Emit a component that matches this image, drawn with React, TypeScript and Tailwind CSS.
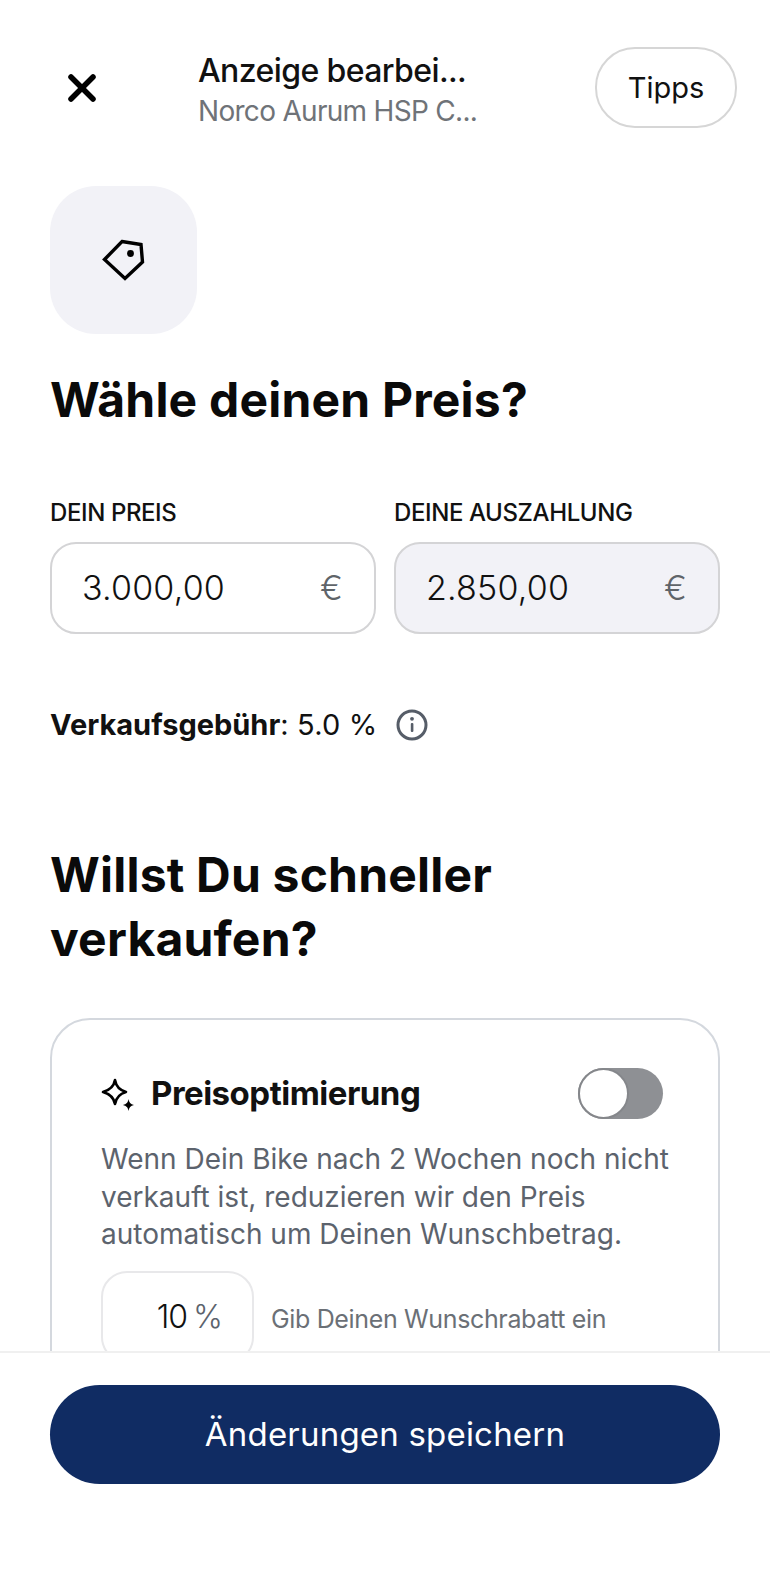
import { X } from "lucide-react";

const font = "font-['Inter',sans-serif]";

function PriceField({ label, value, filled }: { label: string; value: string; filled?: boolean }) {
  return (
    <div className="flex-1">
      <div className="text-[24px] leading-[30px] font-medium text-[#111] tracking-[-0.4px]">{label}</div>
      <div
        className={`mt-[14px] h-[92px] rounded-[26px] border-2 border-[#d4d4d6] flex items-center justify-between pl-[30px] pr-[31px] ${
          filled ? "bg-[#f2f2f7]" : "bg-white"
        }`}
      >
        <span className="-mt-[2px] text-[34px] font-light text-[#111] tracking-[0.2px]">{value}</span>
        <span className="-mt-[2px] text-[34px] font-light text-[#5f6469]">€</span>
      </div>
    </div>
  );
}

function TagIcon() {
  return (
    <svg width="44" height="44" viewBox="0 0 44 44" fill="none" stroke="#000" strokeWidth="3.4" strokeLinejoin="miter">
      <path d="M20 3.5 L39 6.5 L40.5 24 L23 40.5 L2.5 21.5 Z" />
      <circle cx="28.5" cy="15.5" r="3.4" fill="#000" stroke="none" />
    </svg>
  );
}

function SparkleIcon() {
  return (
    <svg width="34" height="34" viewBox="0 0 34 34" fill="none">
      <path d="M14 3 C15 9 18 13 25 15 C18 17 15 21 14 27 C13 21 9 17 2 15 C9 13 13 9 14 3 Z" stroke="#000" strokeWidth="2.6" strokeLinejoin="round" />
      <path d="M27.5 22 C28 25.5 29.5 27 33 28 C29.5 29 28 30.5 27.5 34 C27 30.5 25.5 29 22 28 C25.5 27 27 25.5 27.5 22 Z" fill="#000" />
    </svg>
  );
}

function InfoIcon() {
  return (
    <svg width="32" height="32" viewBox="0 0 32 32" fill="none">
      <circle cx="16" cy="16" r="14" stroke="#565d68" strokeWidth="3" />
      <rect x="14.8" y="14" width="2.6" height="9" rx="1" fill="#565d68" />
      <circle cx="16" cy="9.8" r="1.9" fill="#565d68" />
    </svg>
  );
}

export default function App() {
  return (
    <div className={`${font} h-[1586px] w-[770px] bg-white flex flex-col overflow-hidden`}>
      <div className="flex-1 min-h-0 overflow-hidden">
        <header className="flex items-start pt-[47px] pl-[60px] pr-[33px]">
          <div className="w-[138px] h-[81px] flex items-center shrink-0">
            <X size={44} strokeWidth={3} color="#000" />
          </div>
          <div className="flex-1 min-w-0 pt-[4px]">
            <div className="text-[32px] leading-[40px] font-medium text-[#111] tracking-[-0.6px]">Anzeige bearbei...</div>
            <div className="mt-[1px] text-[28px] leading-[38px] text-[#6f7378] tracking-[-0.7px]">Norco Aurum HSP C...</div>
          </div>
          <button className="w-[142px] h-[81px] rounded-[40px] border-2 border-[#d6d6d6] text-[29px] text-[#111] shrink-0">
            Tipps
          </button>
        </header>

        <div className="px-[50px]">
          <div className="mt-[56px] w-[147px] h-[148px] rounded-[46px] bg-[#f2f2f7] flex items-center justify-center">
            <TagIcon />
          </div>
          <h1 className="mt-[34px] text-[48px] leading-[64px] font-bold text-[#0a0a0a] tracking-[0.2px]">Wähle deinen Preis?</h1>

          <div className="mt-[66px] flex gap-[18px]">
            <PriceField label="DEIN PREIS" value="3.000,00" />
            <PriceField label="DEINE AUSZAHLUNG" value="2.850,00" filled />
          </div>

          <div className="mt-[74px] flex items-center h-[34px] text-[29px] text-[#111]">
            <span className="font-bold">Verkaufsgebühr</span>
            <span className="tracking-[0.2px]">: 5.0 %</span>
            <span className="ml-[18px]">
              <InfoIcon />
            </span>
          </div>

          <h2 className="mt-[101px] text-[48px] leading-[64px] font-bold text-[#0a0a0a] tracking-[0.2px]">
            Willst Du schneller
            <br />
            verkaufen?
          </h2>

          <div className="mt-[47px] rounded-[40px] border-2 border-[#d4d8de] pt-[48px] pl-[49px] pr-[49px] pb-[40px]">
            <div className="flex items-center justify-between pr-[6px]">
              <div className="flex items-center gap-[16px]">
                <SparkleIcon />
                <span className="text-[33px] font-bold text-[#111] tracking-[-0.5px]">Preisoptimierung</span>
              </div>
              <div className="relative w-[85px] h-[51px] rounded-full bg-[#8e9094]">
                <div className="absolute left-0 top-0 w-[51px] h-[51px] rounded-full bg-white border-2 border-[#85878b]" />
              </div>
            </div>
            <p className="mt-[22px] text-[28px] leading-[37.5px] text-[#5c636d]">
              Wenn Dein Bike nach 2 Wochen noch nicht verkauft ist, reduzieren wir den Preis automatisch um Deinen Wunschbetrag.
            </p>
            <div className="mt-[17px] flex items-center gap-[17px]">
              <div className="w-[153px] h-[92px] rounded-[26px] border-2 border-[#e8e8ea] flex items-center justify-end pr-[30px] text-[32px] font-light text-[#111] tracking-[-1px]">
                10<span className="ml-[6px] text-[#5c636d]">%</span>
              </div>
              <span className="mt-[6px] text-[25px] text-[#6b7076] tracking-[-0.35px]">Gib Deinen Wunschrabatt ein</span>
            </div>
          </div>
        </div>
      </div>

      <footer className="h-[235px] shrink-0 border-t-2 border-[#f0f0f0] bg-white px-[50px] pt-[32px]">
        <button className="w-full h-[99px] rounded-full bg-[#102c63] text-white text-[33px] tracking-[0.2px]">
          Änderungen speichern
        </button>
      </footer>
    </div>
  );
}
